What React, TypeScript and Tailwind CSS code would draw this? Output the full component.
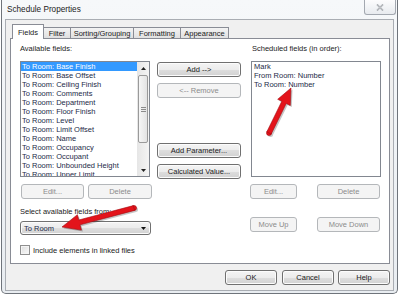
import React from 'react';

const leftFields = [
  'Base Finish',
  'Base Offset',
  'Ceiling Finish',
  'Comments',
  'Department',
  'Floor Finish',
  'Level',
  'Limit Offset',
  'Name',
  'Occupancy',
  'Occupant',
  'Unbounded Height',
  'Upper Limit',
];

const scheduled = ['Mark', 'From Room: Number', 'To Room: Number'];

type BtnProps = {
  label: string;
  className?: string;
  disabled?: boolean;
};

const Btn: React.FC<BtnProps> = ({ label, className = '', disabled }) => (
  <div
    className={`h-[15px] shrink-0 flex items-center justify-center rounded-[3px] border leading-[9px] ${
      disabled
        ? 'border-[#b4b7ba] bg-[#f4f4f4] text-[#8c8c8c]'
        : 'border-[#707070] bg-[linear-gradient(180deg,#f4f4f4_0%,#ececec_50%,#dedede_50%,#d2d2d2_100%)] text-[#1b1b1b] shadow-[inset_0_0_0_1px_#fcfcfc]'
    } ${className}`}
  >
    {label}
  </div>
);

const Scrollbar = () => (
  <div className="w-[12px] h-full flex flex-col bg-[linear-gradient(90deg,#e6e6e6,#f4f4f4)]">
    <div className="h-[12px] flex items-center justify-center">
      <svg width="5" height="3" viewBox="0 0 5 3">
        <path d="M0 3 L2.5 0 L5 3 Z" fill="#222" />
      </svg>
    </div>
    <div className="flex-1 px-[1px] pt-[1px]">
      <div className="h-[68px] rounded-[2px] border border-[#9a9a9a] bg-[linear-gradient(90deg,#f6f6f6,#e3e3e3)] flex flex-col items-center justify-center gap-[1px]">
        <div className="w-[5px] h-[1px] bg-[#8a8a8a]" />
        <div className="w-[5px] h-[1px] bg-[#8a8a8a]" />
        <div className="w-[5px] h-[1px] bg-[#8a8a8a]" />
      </div>
    </div>
    <div className="h-[12px] flex items-center justify-center">
      <svg width="5" height="3" viewBox="0 0 5 3">
        <path d="M0 0 L2.5 3 L5 0 Z" fill="#222" />
      </svg>
    </div>
  </div>
);

const Tab: React.FC<{ label: string; className: string }> = ({ label, className }) => (
  <div
    className={`h-[11px] flex items-center justify-center border-t border-r border-[#898c95] bg-[linear-gradient(180deg,#f3f3f3,#e0e0e0)] leading-[9px] ${className}`}
  >
    {label}
  </div>
);

export default function App() {
  return (
    <div className="relative w-[400px] h-[296px] overflow-hidden bg-white font-['Liberation_Sans',Arial,sans-serif] text-[7.5px] text-[#1b1b1b]">
      <div className="ml-[1px] w-[397px] h-[294px] flex flex-col border-x border-b border-[#6f747b] rounded-b-[5px] bg-[linear-gradient(180deg,#f6f8fa,#e9edf1)]">
        {/* title bar */}
        <div className="h-[19px] shrink-0 flex justify-between">
          <span className="pl-[5px] pt-[5px] text-[8.2px] leading-[10px] text-[#222]">Schedule Properties</span>
          <div className="mr-[1px] w-[32px] h-[15px] flex items-center justify-center border-x border-b border-[#a3a8b0] rounded-b-[3px] bg-[linear-gradient(180deg,#fcfcfd,#e8ebef)]">
            <svg width="8" height="7" viewBox="0 0 8 7">
              <path d="M1 0.5 L7 6.5 M7 0.5 L1 6.5" stroke="#9a9ea4" strokeWidth="1.6" />
              <path d="M1 0.5 L7 6.5 M7 0.5 L1 6.5" stroke="#f4f4f4" strokeWidth="0.5" />
            </svg>
          </div>
        </div>

        {/* client */}
        <div className="mx-[3px] mb-[2px] flex-1 flex flex-col border border-[#a9adb3] bg-[#f0f0f0] pl-[4px]">
          {/* tabs */}
          <div className="h-[18px] shrink-0 flex items-end">
            <div className="relative z-10 ml-[2px] -mb-px w-[32px] h-[15px] flex items-center justify-center border-x border-t border-[#898c95] bg-white leading-[9px]">
              Fields
            </div>
            <Tab label="Filter" className="w-[27px]" />
            <Tab label="Sorting/Grouping" className="w-[63px]" />
            <Tab label="Formatting" className="w-[47px]" />
            <Tab label="Appearance" className="w-[48px]" />
          </div>

          {/* panel */}
          <div className="w-[380px] h-[226px] shrink-0 flex border border-[#898c95] bg-white pl-[9px]">
            {/* left column */}
            <div className="w-[131px] pt-[5px] flex flex-col">
              <div className="h-[10px] leading-[10px]">Available fields:</div>
              <div className="mt-[7px] w-[130px] h-[116px] flex border border-[#828790] bg-white">
                <div className="flex-1 overflow-hidden text-[#1d2a47]">
                  {leftFields.map((f, i) => (
                    <div
                      key={f}
                      className={`h-[9px] leading-[9px] pl-[1px] whitespace-nowrap ${i === 0 ? 'bg-[#3399ff] text-white' : ''}`}
                    >
                      To Room: {f}
                    </div>
                  ))}
                </div>
                <Scrollbar />
              </div>
              <div className="mt-[7px] flex">
                <Btn label="Edit..." disabled className="ml-[1px] w-[63px]" />
                <Btn label="Delete" disabled className="ml-[4px] w-[64px]" />
              </div>
              <div className="mt-[8px] h-[10px] leading-[10px]">Select available fields from:</div>
              <div className="mt-[4px] w-[131px] h-[14px] flex items-center justify-between px-[3px] rounded-[3px] border border-[#707070] bg-[linear-gradient(180deg,#f4f4f4_0%,#ececec_50%,#dedede_50%,#d2d2d2_100%)] shadow-[inset_0_0_0_1px_#fcfcfc] text-[#1d2a47]">
                <span className="leading-[9px]">To Room</span>
                <svg width="5" height="3" viewBox="0 0 5 3" className="mr-[1px]">
                  <path d="M0 0 L2.5 3 L5 0 Z" fill="#111" />
                </svg>
              </div>
              <div className="mt-[10px] h-[10px] flex items-center">
                <div className="w-[10px] h-[10px] border border-[#8f8f8f] bg-[linear-gradient(135deg,#dcdcdc,#fafafa)] shadow-[inset_0_0_0_1px_#f4f4f4]" />
                <span className="ml-[3px] leading-[9px]">Include elements in linked files</span>
              </div>
            </div>

            {/* middle column */}
            <div className="ml-[6px] w-[84px] pt-[23px] flex flex-col">
              <Btn label="Add -->" className="w-full h-[14px]" />
              <Btn label="<-- Remove" disabled className="mt-[6px] w-full h-[14px]" />
              <Btn label="Add Parameter..." className="mt-[45px] w-full h-[14px]" />
              <Btn label="Calculated Value..." className="mt-[6px] w-full h-[14px]" />
            </div>

            {/* right column */}
            <div className="ml-[10px] w-[130px] pt-[5px] flex flex-col">
              <div className="h-[10px] leading-[10px] pl-[1px]">Scheduled fields (in order):</div>
              <div className="mt-[7px] w-[130px] h-[116px] border border-[#828790] bg-white text-[#1d2a47]">
                {scheduled.map(f => (
                  <div key={f} className="h-[9px] leading-[9px] pl-[2px] whitespace-nowrap">
                    {f}
                  </div>
                ))}
              </div>
              <div className="mt-[7px] flex">
                <Btn label="Edit..." disabled className="-ml-px w-[47px]" />
                <Btn label="Delete" disabled className="ml-[20px] w-[63px]" />
              </div>
              <div className="mt-[18px] flex">
                <Btn label="Move Up" disabled className="-ml-px w-[47px]" />
                <Btn label="Move Down" disabled className="ml-[20px] w-[63px]" />
              </div>
            </div>
          </div>

          {/* dialog buttons */}
          <div className="mt-[6px] w-[380px] flex justify-end">
            <Btn label="OK" className="w-[52px]" />
            <Btn label="Cancel" className="ml-[5px] w-[52px]" />
            <Btn label="Help" className="ml-[4px] w-[52px]" />
          </div>
        </div>
      </div>

      {/* red callout arrows */}
      <svg className="absolute inset-0 pointer-events-none" width="400" height="296" viewBox="0 0 400 296">
        <g transform="translate(1.5 1.5)" fill="#000" opacity="0.22">
          <polygon points="62,227 77.4,214.7 78.8,220.0 133.4,205.6 134.6,210.4 80.0,224.8 81.4,230.1" />
          <circle cx="134" cy="208" r="2.5" />
          <polygon points="291,88 277.7,99.3 281.8,101.3 266.8,131.9 271.2,134.1 286.2,103.5 290.3,105.5" />
          <circle cx="269" cy="133" r="2.5" />
        </g>
        <g fill="#e3141b" stroke="#a30a10" strokeWidth="0.6" strokeLinejoin="round">
          <circle cx="134" cy="208" r="2.5" />
          <polygon points="62,227 77.4,214.7 78.8,220.0 133.4,205.6 134.6,210.4 80.0,224.8 81.4,230.1" />
          <circle cx="269" cy="133" r="2.5" />
          <polygon points="291,88 277.7,99.3 281.8,101.3 266.8,131.9 271.2,134.1 286.2,103.5 290.3,105.5" />
        </g>
      </svg>
    </div>
  );
}
